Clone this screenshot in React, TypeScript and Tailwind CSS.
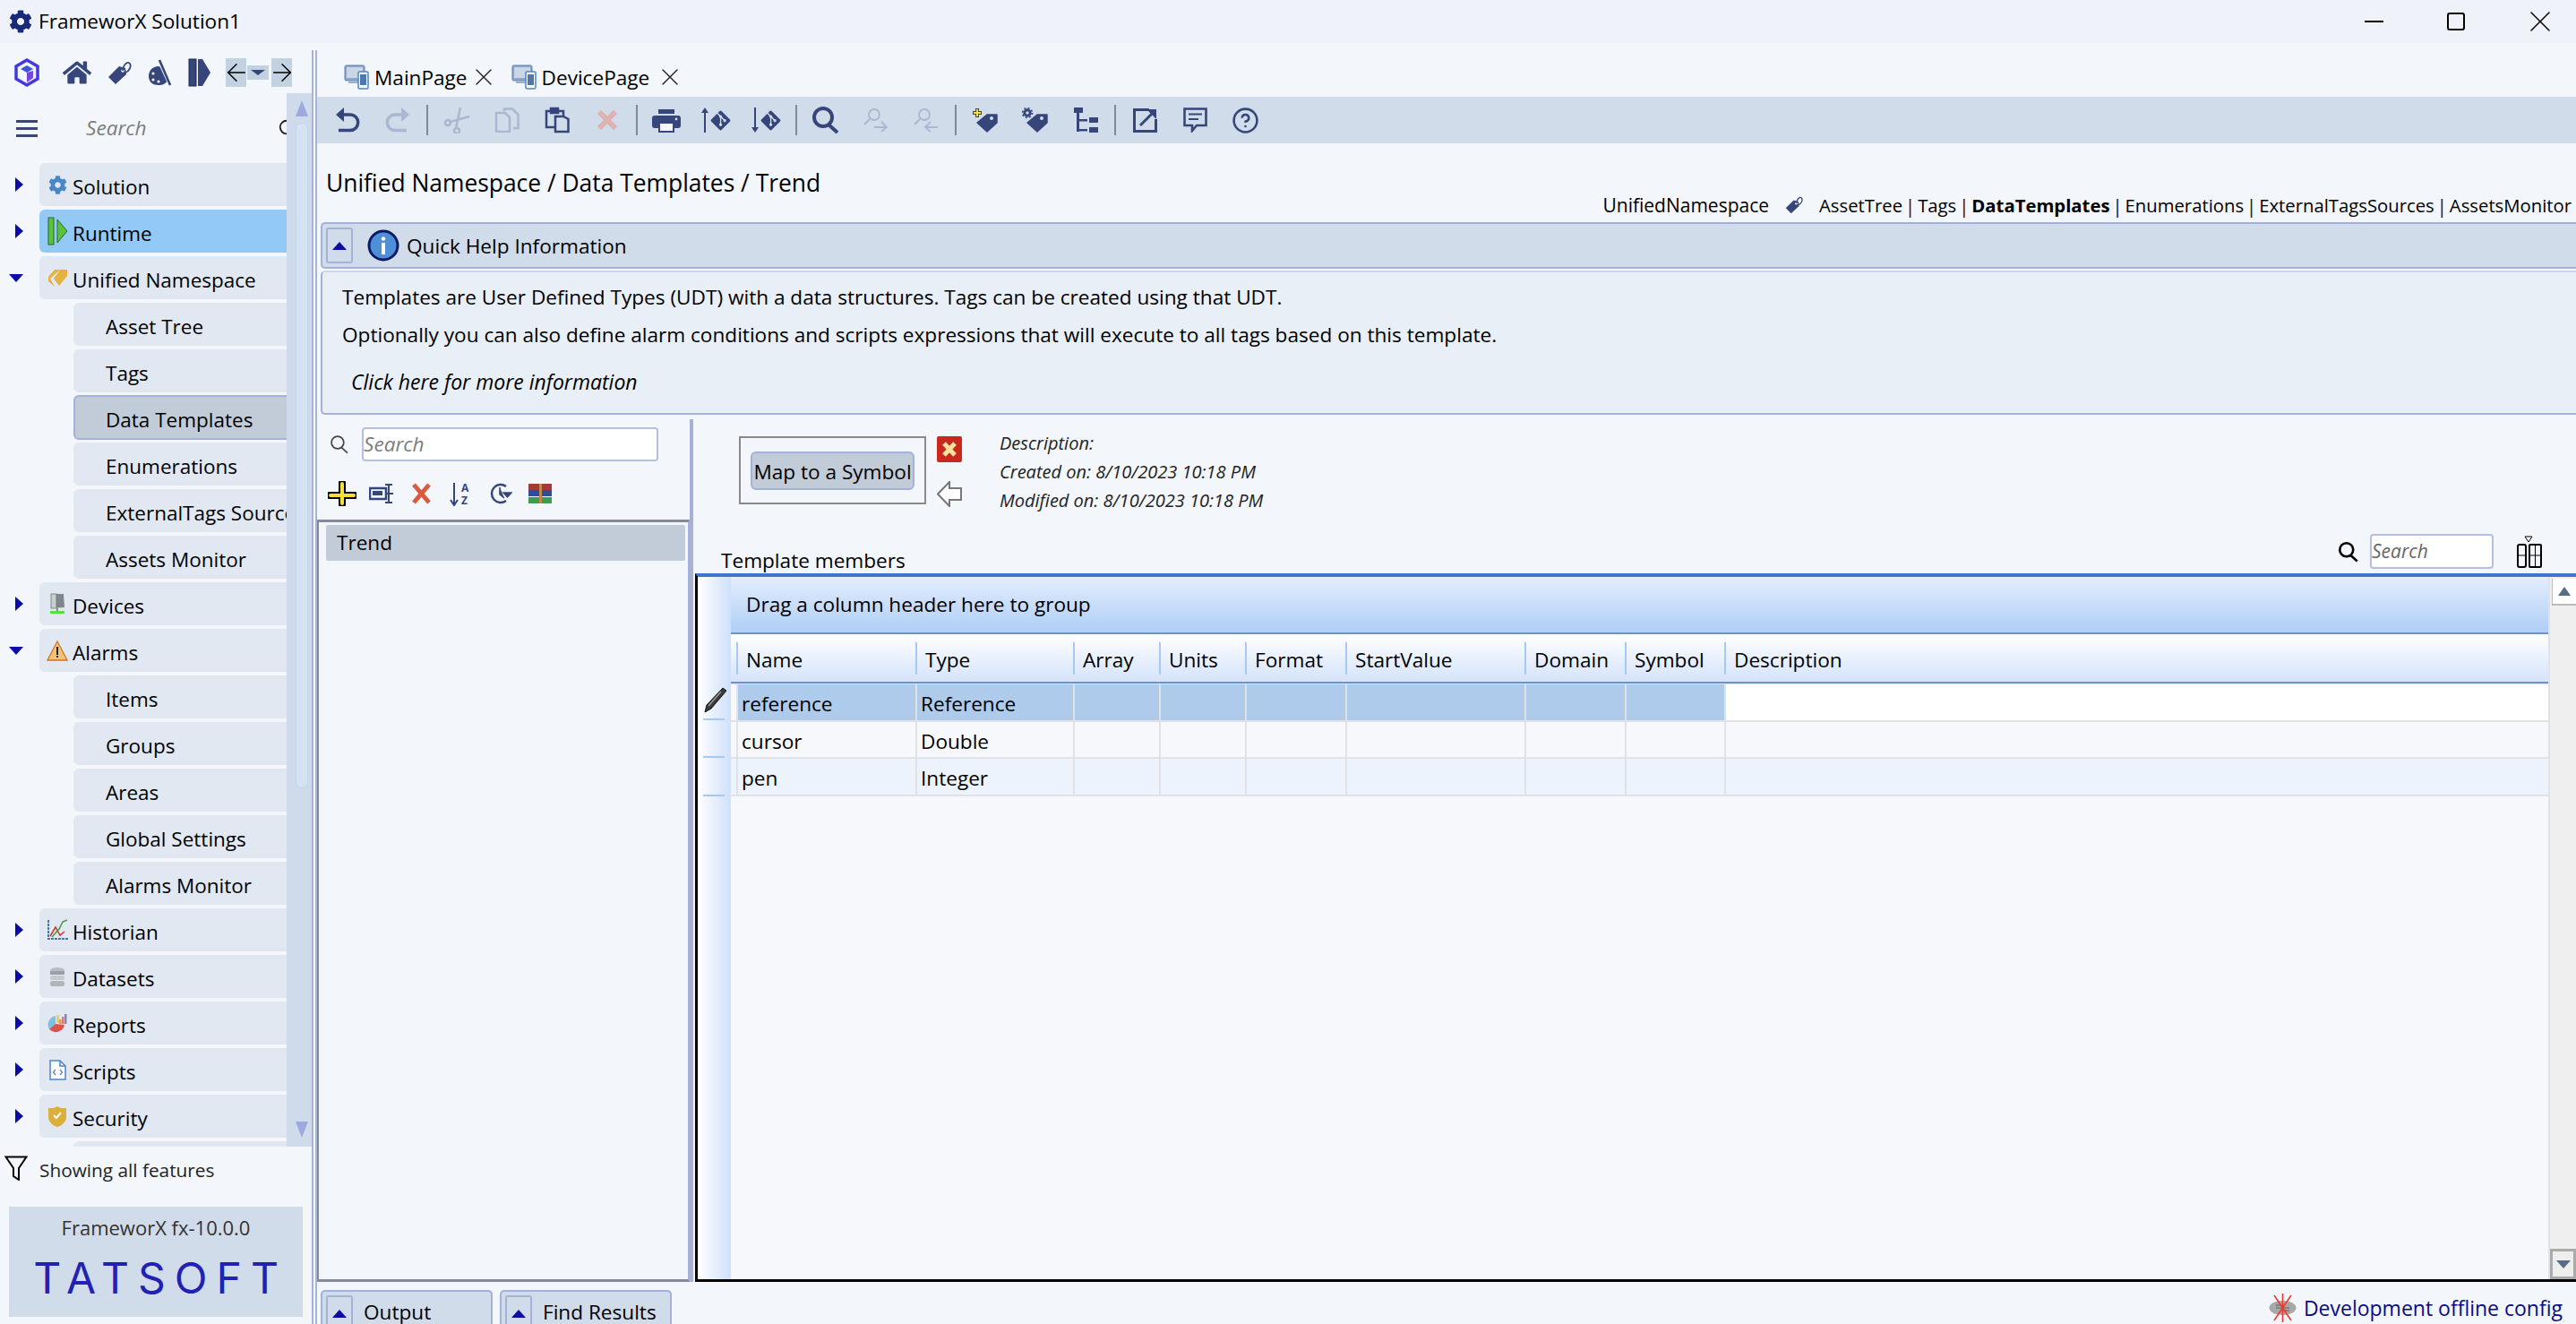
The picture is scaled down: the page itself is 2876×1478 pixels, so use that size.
import { type JSX, type ReactNode } from "react";
import { ArrowLeft, ArrowRight, CircleHelp, Search, X } from "lucide-react";
import { FaCog, FaGitAlt, FaHome } from "react-icons/fa";

const NAVY = "#36467a";
const FADED = "#a9b8d0";

type NavEntry = {
  label: string;
  level: 1 | 2;
  icon?: JSX.Element;
  expanded?: boolean;
  active?: boolean;
  selected?: boolean;
};

const Box = ({ w, h, children, className }: { w: number; h: number; children: ReactNode; className?: string }) => (
  <svg width={w} height={h} viewBox={`0 0 ${w} ${h}`} className={`shrink-0 ${className ?? ""}`}>
    {children}
  </svg>
);

const UpTriangle = () => (
  <Box w={16} h={9}>
    <polygon points="8,0 16,9 0,9" fill="#0b0ba8" />
  </Box>
);

const ToggleButton = () => (
  <div className="flex h-[40px] w-[30px] shrink-0 items-center justify-center rounded-[3px] border-2 border-[#a5b1d6]">
    <UpTriangle />
  </div>
);

const DeviceIcon = () => (
  <Box w={28} h={28}>
    <rect x="1" y="1" width="22" height="17" rx="1.5" fill="#8fa7c8" stroke="#5f7fb0" />
    <rect x="3" y="3" width="18" height="12" fill="#c9d6e6" />
    <rect x="5" y="19" width="14" height="2" fill="#9fb0c8" />
    <rect x="16" y="8" width="11" height="19" rx="1.5" fill="#fff" stroke="#4a86c8" strokeWidth="1.5" />
    <rect x="18" y="11" width="7" height="12" fill="#4f78ad" />
  </Box>
);

const LogoIcon = () => (
  <Box w={30} h={32}>
    <polygon points="15,2 27,9 27,23 15,30 3,23 3,9" fill="none" stroke="#4338e0" strokeWidth="3.5" />
    <path d="M8 12 L15 16 L22 12 L15 8 Z" fill="#3f55d8" />
    <path d="M15 16 L15 27 L22 22 L22 14 Z" fill="#7a45e0" />
  </Box>
);

const TagLoopIcon = ({ size = 27 }: { size?: number }) => (
  <svg width={size} height={size} viewBox="0 0 27 27" className="shrink-0">
    <path d="M13 6 L20 8 L21 15 L9 26 L1 18 Z" fill={NAVY} />
    <circle cx="17" cy="11" r="1.8" fill="#f3f6fb" />
    <path d="M17 11 C18 3 23 0 25 3 C27 6 24 12 20 13" fill="none" stroke={NAVY} strokeWidth="1.8" />
  </svg>
);

const PaletteIcon = () => (
  <Box w={27} h={30}>
    <path d="M12 8 C5 8 1 13 1 19 C1 26 6 29 12 29 C17 29 21 27 22 23 L15 9 Z" fill={NAVY} />
    <circle cx="6" cy="16" r="1.6" fill="#f3f6fb" />
    <circle cx="6" cy="23" r="1.6" fill="#f3f6fb" />
    <circle cx="12" cy="25" r="1.6" fill="#f3f6fb" />
    <path d="M13 2 L25 28" stroke="#f3f6fb" strokeWidth="4.5" />
    <path d="M13 1 L25 29" stroke={NAVY} strokeWidth="2.6" />
  </Box>
);

const RunIcon = () => (
  <Box w={25} h={32}>
    <rect x="1" y="1" width="8" height="30" fill={NAVY} stroke="#1d2a55" strokeWidth="1" />
    <polygon points="11,1 16,1 25,16 16,31 11,31" fill={NAVY} />
  </Box>
);

const FunnelIcon = () => (
  <Box w={26} h={28}>
    <path d="M1.5 1.5 H24.5 L16 14 V27 L10 23 V14 Z" fill="none" stroke="#000" strokeWidth="2" />
  </Box>
);

const NavGlyph = ({ children }: { children: ReactNode }) => (
  <span className="flex w-[24px] shrink-0 items-center justify-center">{children}</span>
);

const solutionIcon = <FaCog size={21} color="#4a86c8" />;
const runtimeIcon = (
  <svg width={23} height={32} viewBox="0 0 23 32">
    <rect x="1" y="1" width="6" height="30" fill="#5cc23d" stroke="#1f6b2a" />
    <polygon points="11,3 22,16 11,29" fill="#5cc23d" stroke="#1f6b2a" />
  </svg>
);
const namespaceIcon = (
  <Box w={24} h={24}>
    <path d="M9 3 H15 L4 13 L9 22 L2 16 V11 Z" fill="#e3b23f" />
    <path d="M15 3 H23 V10 L14 21 L8 13 Z" fill="#e3b23f" />
  </Box>
);
const devicesIcon = (
  <Box w={22} h={24}>
    <path d="M4 1 L18 1 L19 16 L4 17 Z" fill="#7f878c" />
    <rect x="4" y="1" width="6" height="16" fill="#c6cfc9" stroke="#666" strokeWidth="0.7" />
    <rect x="10" y="17" width="2" height="4" fill="#888" />
    <rect x="3" y="20" width="16" height="3" fill="#5ddb3f" />
  </Box>
);
const alarmsIcon = (
  <Box w={24} h={23}>
    <polygon points="12,1 23,22 1,22" fill="#f4c27a" stroke="#c67a20" strokeWidth="1.3" />
    <rect x="11" y="7" width="2" height="9" fill="#222" />
    <rect x="11" y="17" width="2" height="2" fill="#222" />
  </Box>
);
const historianIcon = (
  <Box w={24} h={24}>
    <path d="M2 1 V22 H24" fill="none" stroke="#3f74c4" strokeWidth="2" strokeDasharray="3 1" />
    <path d="M4 19 L10 9 L15 18 L20 14" fill="none" stroke="#d32f2f" strokeWidth="1.5" />
    <path d="M6 20 L14 11 L18 3 L23 1" fill="none" stroke="#3f9b3f" strokeWidth="1.5" />
  </Box>
);
const datasetsIcon = (
  <Box w={20} h={23}>
    <ellipse cx="10" cy="4" rx="8" ry="3" fill="#b9bdc2" />
    <rect x="2" y="5" width="16" height="4" fill="#9aa0a6" />
    <rect x="2" y="10" width="16" height="5" rx="2" fill="#c6cacd" />
    <rect x="2" y="16" width="16" height="6" rx="2.5" fill="#b0b5ba" />
  </Box>
);
const reportsIcon = (
  <Box w={24} h={23}>
    <path d="M10 12 L10 3 A10 10 0 0 0 3 18 Z" fill="#7fc0dc" />
    <path d="M10 12 L3 18 A10 10 0 0 0 20 13 Z" fill="#d9534f" />
    <path d="M11 11 V2 L14 2 V11 Z" fill="#e8cf62" />
    <rect x="14" y="7" width="2.5" height="5" fill="#e89a3c" />
    <rect x="17" y="4" width="2.5" height="8" fill="#d77" />
    <rect x="20" y="1" width="2.5" height="11" fill="#88a" />
  </Box>
);
const scriptsIcon = (
  <Box w={19} h={23}>
    <path d="M1 1 H12 L18 7 V22 H1 Z" fill="#fff" stroke="#4a86c8" strokeWidth="1.5" />
    <path d="M12 1 V7 H18" fill="none" stroke="#4a86c8" strokeWidth="1.5" />
    <path d="M7 11 L4.5 14 L7 17 M12 11 L14.5 14 L12 17" fill="none" stroke="#5a7fae" strokeWidth="1.2" />
  </Box>
);
const securityIcon = (
  <Box w={22} h={25}>
    <path d="M11 1 L15 3 H21 V13 C21 19 15 23 11 24 C7 23 1 19 1 13 V3 H7 Z" fill="#dcae3c" />
    <path d="M7 11 L10 14 L15 8" fill="none" stroke="#fff" strokeWidth="2" />
  </Box>
);

const navEntries: NavEntry[] = [
  { label: "Solution", level: 1, icon: solutionIcon },
  { label: "Runtime", level: 1, icon: runtimeIcon, active: true },
  { label: "Unified Namespace", level: 1, icon: namespaceIcon, expanded: true },
  { label: "Asset Tree", level: 2 },
  { label: "Tags", level: 2 },
  { label: "Data Templates", level: 2, selected: true },
  { label: "Enumerations", level: 2 },
  { label: "ExternalTags Sources", level: 2 },
  { label: "Assets Monitor", level: 2 },
  { label: "Devices", level: 1, icon: devicesIcon },
  { label: "Alarms", level: 1, icon: alarmsIcon, expanded: true },
  { label: "Items", level: 2 },
  { label: "Groups", level: 2 },
  { label: "Areas", level: 2 },
  { label: "Global Settings", level: 2 },
  { label: "Alarms Monitor", level: 2 },
  { label: "Historian", level: 1, icon: historianIcon },
  { label: "Datasets", level: 1, icon: datasetsIcon },
  { label: "Reports", level: 1, icon: reportsIcon },
  { label: "Scripts", level: 1, icon: scriptsIcon },
  { label: "Security", level: 1, icon: securityIcon },
  { label: "", level: 2 },
];

const NavRow = ({ entry }: { entry: NavEntry }) => {
  const tone = entry.selected
    ? "h-[50px] -my-px border-2 border-r-0 border-[#a5b1d6] bg-[#c2ccd9] pl-[34px]"
    : entry.active
      ? "h-12 bg-[#92c9f6] pl-[8px]"
      : entry.level === 2
        ? "h-12 bg-[#e1e8f2] pl-[36px]"
        : "h-12 bg-[#e1e8f2] pl-[8px]";

  return (
    <div className="flex shrink-0 items-center">
      <div className={`flex shrink-0 items-center justify-end pr-[18px] ${entry.level === 1 ? "w-[44px]" : "w-[82px]"}`}>
        {entry.level === 1 &&
          (entry.expanded ? (
            <Box w={16} h={9} className="-ml-2">
              <polygon points="0,0 16,0 8,9" fill="#0b0ba8" />
            </Box>
          ) : (
            <Box w={9} h={16}>
              <polygon points="0,0 9,8 0,16" fill="#0b0ba8" />
            </Box>
          ))}
      </div>
      <div className={`flex flex-1 items-center gap-[5px] overflow-hidden rounded-l-md text-[22.5px] whitespace-nowrap ${tone}`}>
        {entry.level === 1 && <NavGlyph>{entry.icon}</NavGlyph>}
        <span className="pt-[6px]">{entry.label}</span>
      </div>
    </div>
  );
};

const Sidebar = () => (
  <aside className="flex w-[348px] shrink-0 flex-col">
    <div className="flex h-14 shrink-0 items-center pt-[10px] pl-[15px]">
      <LogoIcon />
      <span className="ml-[25px]">
        <FaHome size={32} color={NAVY} />
      </span>
      <span className="ml-[18px]">
        <TagLoopIcon />
      </span>
      <span className="ml-[18px]">
        <PaletteIcon />
      </span>
      <span className="ml-[18px]">
        <RunIcon />
      </span>
      <span className="ml-[17px] flex h-[32px] w-[23px] items-center justify-center bg-[#c2d2e0]">
        <ArrowLeft size={32} color="#000" strokeWidth={1.1} className="shrink-0" />
      </span>
      <span className="ml-px flex h-[16px] w-[24px] items-center justify-center bg-[#c2d2e0]">
        <Box w={16} h={6}>
          <polygon points="0,0 16,0 8,6" fill={NAVY} />
        </Box>
      </span>
      <span className="ml-[3px] flex h-[32px] w-[23px] items-center justify-center bg-[#c2d2e0]">
        <ArrowRight size={32} color="#000" strokeWidth={1.1} className="shrink-0" />
      </span>
    </div>

    <div className="flex min-h-0 flex-1">
      <div className="flex w-[320px] shrink-0 flex-col gap-1 overflow-hidden">
        <div className="-mb-1 flex h-[78px] shrink-0 items-center overflow-hidden pl-[18px]">
          <span className="flex w-[24px] shrink-0 flex-col gap-[5px]">
            <span className="h-[3px] bg-[#36467a]" />
            <span className="h-[3px] bg-[#36467a]" />
            <span className="h-[3px] bg-[#36467a]" />
          </span>
          <span className="ml-[54px] text-[#7d7d7d] italic">Search</span>
          <span className="-mr-[12px] ml-auto">
            <Search size={22} color="#222" />
          </span>
        </div>
        {navEntries.map((entry, index) => (
          <NavRow key={index} entry={entry} />
        ))}
      </div>
      <div className="flex w-[28px] shrink-0 flex-col bg-[#cfdbea] pt-[8px] pb-[10px] pl-[10px]">
        <Box w={14} h={18}>
          <polygon points="7,0 14,18 0,18" fill="#9ea9de" />
        </Box>
        <div className="mt-[7px] h-[743px] w-[14px] rounded-full border border-[#c3d5e8] bg-[#d3e3f2]" />
        <div className="mt-auto">
          <Box w={14} h={18}>
            <polygon points="0,0 14,0 7,18" fill="#9ea9de" />
          </Box>
        </div>
      </div>
    </div>

    <div className="flex h-[67px] shrink-0 items-start pt-[10px] pl-[5px] text-[20.8px] text-[#222]">
      <FunnelIcon />
      <span className="ml-[13px] leading-[32px]">Showing all features</span>
    </div>
    <div className="mr-[10px] mb-[8px] ml-[10px] flex h-[123px] shrink-0 flex-col items-center bg-[#d1dcea] pt-[7px]">
      <span className="text-[22px] leading-[32px] text-[#333]">FrameworX fx-10.0.0</span>
      <span className="mt-[14px] pl-[10px] font-['Inter',sans-serif] text-[48px] leading-[54px] font-normal tracking-[10px] text-[#2121b5]">
        TATSOFT
      </span>
    </div>
  </aside>
);

const Undo = ({ color, flip }: { color: string; flip?: boolean }) => (
  <svg width={28} height={28} viewBox="0 0 28 28" className={flip ? "-scale-x-100" : ""}>
    <polygon points="1,8 10,0 10,16" fill={color} />
    <path d="M8 8 H17 A8 8 0 0 1 17 25.5 H4" fill="none" stroke={color} strokeWidth="3.5" />
  </svg>
);

const Scissors = () => (
  <Box w={30} h={30}>
    <g fill="none" stroke={FADED} strokeWidth="2.5">
      <circle cx="5" cy="18" r="3" />
      <circle cx="15" cy="27" r="3" />
      <path d="M8 17 L29 11 M14 24 L19 1" />
    </g>
  </Box>
);

const Copy = () => (
  <Box w={28} h={28}>
    <g fill="none" stroke={FADED} strokeWidth="2.5">
      <path d="M11 4 V1.5 H20 L26.5 8 V23 H21" />
      <path d="M2 6 H12 L17 11 V27 H2 Z" />
    </g>
  </Box>
);

const Paste = () => (
  <Box w={28} h={30}>
    <g fill="none" stroke={NAVY} strokeWidth="2.5">
      <path d="M7 5 H2 V23 H11" />
      <path d="M15 5 H21 V10" />
      <rect x="7" y="2" width="8" height="5" fill={NAVY} />
      <path d="M12 11 H21 L26.5 14 V28 H12 Z" />
    </g>
  </Box>
);

const CrossX = () => (
  <Box w={24} h={24}>
    <path d="M3 3 L21 21 M21 3 L3 21" stroke="#e4a9a4" strokeWidth="5.5" />
    <path d="M3 3 L21 21 M21 3 L3 21" stroke="#dcb6b6" strokeWidth="3" />
  </Box>
);

const PrintIcon = () => (
  <Box w={32} h={27}>
    <rect x="7" y="1" width="18" height="5" fill={NAVY} />
    <rect x="0" y="8" width="32" height="14" rx="3" fill={NAVY} />
    <circle cx="27" cy="12" r="1.4" fill="#d1dcea" />
    <rect x="8" y="16" width="16" height="10" fill="#f3f6fb" stroke={NAVY} strokeWidth="2" />
  </Box>
);

const GitArrow = ({ up }: { up?: boolean }) => (
  <span className="flex items-center gap-[1px]">
    <svg width={8} height={28} viewBox="0 0 8 28">
      {up ? (
        <polygon points="4,0 8,6 5,6 5,28 3,28 3,6 0,6" fill={NAVY} />
      ) : (
        <polygon points="3,0 5,0 5,22 8,22 4,28 0,22 3,22" fill={NAVY} />
      )}
    </svg>
    <FaGitAlt size={25} color={NAVY} />
  </span>
);

const Magnifier = ({ color = NAVY, size = 32, stroke = 4 }: { color?: string; size?: number; stroke?: number }) => (
  <svg width={size} height={size} viewBox="0 0 32 32" className="shrink-0">
    <circle cx="13" cy="13" r="10" fill="none" stroke={color} strokeWidth={stroke} />
    <path d="M19 21 L29 30" stroke={color} strokeWidth={stroke} />
  </svg>
);

const UserArrow = ({ back }: { back?: boolean }) => (
  <Box w={30} h={28}>
    <g fill="none" stroke={FADED} strokeWidth="1.8">
      <circle cx="13" cy="8" r="6" />
      <path d="M8 13 L2 19" />
      {back ? <path d="M28 22 H14 M20 16 L14 22 L20 27" /> : <path d="M13 22 H27 M21 16 L27 22 L21 27" />}
    </g>
  </Box>
);

const TagBadge = ({ gear }: { gear?: boolean }) => (
  <Box w={30} h={28}>
    <path d="M17 8 H28 V17 L17 27 L6 17 Z" fill={NAVY} strokeLinejoin="round" stroke={NAVY} strokeWidth="1.5" />
    <circle cx="22" cy="12" r="2" fill="#d1dcea" />
    {gear ? (
      <g fill="none" stroke={NAVY}>
        <circle cx="6" cy="6" r="3.2" strokeWidth="3" />
        <circle cx="6" cy="6" r="5.5" strokeWidth="1.6" strokeDasharray="2 2.3" />
      </g>
    ) : (
      <>
        <path d="M6 1 V11 M1 6 H11" stroke="#444" strokeWidth="4" />
        <path d="M6 2 V10 M2 6 H10" stroke="#f8df33" strokeWidth="2" />
      </>
    )}
  </Box>
);

const TreeIcon = () => (
  <Box w={27} h={28}>
    <g fill={NAVY}>
      <rect x="0" y="0" width="10" height="6" />
      <rect x="3" y="6" width="3" height="21" />
      <rect x="5" y="13" width="10" height="2.5" />
      <rect x="5" y="24" width="10" height="2.5" />
      <rect x="17" y="11" width="10" height="6" />
      <rect x="17" y="22" width="10" height="6" />
    </g>
  </Box>
);

const ExternalIcon = () => (
  <Box w={27} h={27}>
    <g fill="none" stroke={NAVY} strokeWidth="3">
      <path d="M18 1.5 H1.5 V25.5 H25.5 V12" />
      <path d="M8 19 L22 5" />
    </g>
    <polygon points="15,1 26,1 26,12" fill={NAVY} />
  </Box>
);

const CommentIcon = () => (
  <Box w={27} h={28}>
    <path d="M1.5 1.5 H25.5 V20 H15 L10 26 V20 H1.5 Z" fill="none" stroke={NAVY} strokeWidth="2.6" />
    <path d="M6 7.5 H21 M6 13 H17" stroke={NAVY} strokeWidth="2.2" />
  </Box>
);

const toolbarItems: (JSX.Element | "sep")[] = [
  <Undo color={NAVY} />,
  <Undo color={FADED} flip />,
  "sep",
  <Scissors />,
  <Copy />,
  <Paste />,
  <CrossX />,
  "sep",
  <PrintIcon />,
  <GitArrow up />,
  <GitArrow />,
  "sep",
  <Magnifier />,
  <UserArrow />,
  <UserArrow back />,
  "sep",
  <TagBadge />,
  <TagBadge gear />,
  <TreeIcon />,
  "sep",
  <ExternalIcon />,
  <CommentIcon />,
  <CircleHelp size={31} color={NAVY} strokeWidth={2} />,
];

const Toolbar = () => (
  <div className="flex h-[52px] shrink-0 items-center bg-[#d1dcea] pl-1.5">
    {toolbarItems.map((item, index) =>
      item === "sep" ? (
        <span key={index} className="flex h-[34px] w-[10px] justify-center">
          <span className="h-full w-[2px] bg-[#808a94]" />
        </span>
      ) : (
        <span key={index} className="flex w-14 items-center justify-center">
          {item}
        </span>
      ),
    )}
  </div>
);

const subLinks = ["AssetTree", "Tags", "DataTemplates", "Enumerations", "ExternalTagsSources", "AssetsMonitor"];

const PageTab = ({ label, first }: { label: string; first?: boolean }) => (
  <div className={`flex items-center ${first ? "" : "ml-[23px]"}`}>
    <DeviceIcon />
    <span className="ml-[6px]">{label}</span>
    <span className={`flex w-[16px] items-center justify-center ${first ? "ml-[10px]" : "ml-[15px]"}`}>
      <X size={32} color="#222" strokeWidth={1} className="shrink-0" />
    </span>
  </div>
);

const columns = ["Name", "Type", "Array", "Units", "Format", "StartValue", "Domain", "Symbol", "Description"];
const columnGrid = "grid grid-cols-[200px_176px_96px_96px_112px_200px_112px_111px_1fr]";

const rows = [
  { name: "reference", type: "Reference", height: "h-[42px]", tone: "bg-[#f6f8fc]", selected: true },
  { name: "cursor", type: "Double", height: "h-[41px]", tone: "bg-[#f6f8fc]" },
  { name: "pen", type: "Integer", height: "h-[42px]", tone: "bg-[#edf3fd]" },
];

const ColumnChooser = () => (
  <Box w={33} h={36}>
    <polygon points="12,1 20,1 16,7" fill="none" stroke="#000" strokeWidth="1" />
    <rect x="4" y="10" width="9" height="25" rx="2" fill="none" stroke="#000" strokeWidth="2" />
    <rect x="17" y="10" width="13" height="25" rx="1" fill="none" stroke="#000" strokeWidth="2" />
    <path d="M4 22 H13 M17 22 H30 M23.5 10 V35" stroke="#000" strokeWidth="1" />
  </Box>
);

const MembersGrid = () => (
  <div className="flex min-h-0 flex-1 border-t-4 border-b-[3px] border-l-[3px] border-t-[#3e76cd] border-b-black border-l-black">
    <div className="w-[37px] shrink-0 bg-linear-to-r from-white to-[#cfe0fb] pt-[122px] pl-[6px]">
      <svg width={28} height={30} viewBox="0 0 28 30">
        <path d="M22 2 L26 5 L9 25 L2 29 L4 21 Z" fill="#3a3a3a" stroke="#111" />
        <path d="M6 22 L20 6" stroke="#999" strokeWidth="1.5" />
      </svg>
      <div className="mt-[6px] h-[2px] w-[24px] bg-[#a8c8f4]" />
      <div className="mt-[40px] h-[2px] w-[24px] bg-[#a8c8f4]" />
      <div className="mt-[41px] h-[2px] w-[24px] bg-[#a8c8f4]" />
    </div>

    <div className="flex min-w-0 flex-1 flex-col bg-[#f6f8fc]">
      <div className="flex h-[64px] shrink-0 items-center border-b-2 border-[#6e93c9] bg-linear-to-b from-[#e3eefd] to-[#b0cdf6] pl-[17px]">
        Drag a column header here to group
      </div>
      <div className={`h-[55px] shrink-0 items-center border-b-2 border-[#6e93c9] bg-linear-to-b from-white to-[#d4e3fb] pl-[6px] ${columnGrid}`}>
        {columns.map((column) => (
          <div key={column} className="flex h-[36px] items-center border-l-2 border-[#a8c8f4] pt-1 pl-[9px]">
            {column}
          </div>
        ))}
      </div>
      <div className="h-px shrink-0 bg-[#e0e2e8]" />
      {rows.map((row) => (
        <div key={row.name} className={`shrink-0 border-b-2 border-[#e0e2e8] pl-[6px] ${row.height} ${row.tone} ${columnGrid}`}>
          {columns.map((column, index) => {
            const isLast = index === columns.length - 1;
            const fill = row.selected ? (isLast ? "bg-white" : "bg-[#aecbeb]") : "";
            const text = index === 0 ? row.name : index === 1 ? row.type : "";
            return (
              <div key={column} className={`flex items-center border-l-2 border-[#e0e2e8] pt-1 pl-[4px] ${fill}`}>
                {text}
              </div>
            );
          })}
        </div>
      ))}
    </div>

    <div className="flex w-[31px] shrink-0 flex-col border-l-2 border-[#e0e2e8] bg-[#efefef] pt-[2px]">
      <div className="ml-[2px] flex h-[30px] items-center justify-center border-b-2 border-l border-[#bbb] bg-white">
        <Box w={14} h={10}>
          <polygon points="7,0 14,10 0,10" fill="#5a6b85" />
        </Box>
      </div>
      <div className="mt-auto flex h-[34px] items-center justify-center border-[3px] border-[#aaa] bg-[#eee]">
        <Box w={16} h={9}>
          <polygon points="0,0 16,0 8,9" fill="#5a6b85" />
        </Box>
      </div>
    </div>
  </div>
);

const TemplateList = () => (
  <div className="flex w-[416px] shrink-0 flex-col">
    <div className="flex items-center pt-[9px] pl-[14px]">
      <Magnifier color="#444" size={22} stroke={2.5} />
      <div className="ml-[14px] flex h-[38px] w-[331px] items-center rounded-[4px] border-2 border-[#b5bfe0] bg-white text-[#7d7d7d] italic">
        Search
      </div>
    </div>
    <div className="mt-[22px] flex h-[28px] items-center pl-[12px]">
      <svg width={32} height={28} viewBox="0 0 32 28">
        <path d="M16 2 V26 M2 16 H30" stroke="#000" strokeWidth="8" strokeLinecap="round" />
        <path d="M16 3 V25 M3 16 H29" stroke="#f8df33" strokeWidth="4" strokeLinecap="round" />
      </svg>
      <span className="ml-[14px]">
        <Box w={28} h={24}>
          <rect x="1" y="6" width="18" height="12" fill="none" stroke={NAVY} strokeWidth="2.5" />
          <rect x="4" y="9" width="11" height="5" fill={NAVY} />
          <path d="M22 2 V22 M18 2 H26 M18 22 H26 M19 12 H27" stroke={NAVY} strokeWidth="2" />
        </Box>
      </span>
      <span className="ml-[19px]">
        <Box w={23} h={24}>
          <path d="M3 2 L20 22 M20 2 L3 22" stroke="#d95a3c" strokeWidth="5" />
        </Box>
      </span>
      <span className="ml-[20px]">
        <Box w={24} h={27}>
          <path d="M5 1 V25 M1 20 L5 26 L9 20" fill="none" stroke={NAVY} strokeWidth="2" />
          <text x="13" y="11" fontSize="12" fontWeight="700" fill={NAVY}>A</text>
          <text x="13" y="25" fontSize="12" fontWeight="700" fill={NAVY}>Z</text>
        </Box>
      </span>
      <span className="ml-[21px]">
        <Box w={25} h={24}>
          <path d="M18 20 A10 10 0 1 1 18 4" fill="none" stroke={NAVY} strokeWidth="2.5" />
          <path d="M11 5 V13 L16 17 M15 11 H24 L19.5 16 Z" fill={NAVY} stroke={NAVY} strokeWidth="1.5" />
        </Box>
      </span>
      <span className="ml-[16px]">
        <Box w={28} h={22}>
          <rect x="2" y="0" width="26" height="7" fill="#a33a3a" />
          <rect x="2" y="7" width="26" height="7" fill="#2f4da0" />
          <rect x="2" y="15" width="26" height="7" fill="#3f9b4f" />
          <rect x="14" y="0" width="3" height="22" fill="#c08a4a" />
        </Box>
      </span>
    </div>
    <div className="mt-[15px] flex min-h-0 flex-1 flex-col border-t-[3px] border-r-2 border-b-[3px] border-l-2 border-t-[#85899a] border-r-[#a5b1d6] border-b-[#85899a] border-l-[#85899a] pt-[3px] pr-[3px] pl-[8px]">
      <div className="flex h-[40px] items-center rounded-[2px] bg-[#c2ccd9] pl-[12px]">Trend</div>
    </div>
  </div>
);

const TemplateDetail = () => (
  <div className="ml-[2px] flex min-w-0 flex-1 flex-col">
    <div className="flex h-[98px] shrink-0 items-start pt-[19px] pl-[49px]">
      <div className="flex h-[76px] w-[209px] items-center justify-center border-2 border-[#8a8a8a]">
        <div className="flex h-[43px] w-[183px] items-center justify-center rounded-[6px] border-2 border-[#a5b1d6] bg-[#c2ccd9] pt-1 whitespace-nowrap">
          Map to a Symbol
        </div>
      </div>
      <div className="ml-[12px] flex w-[28px] flex-col gap-[21px]">
        <Box w={28} h={29}>
          <rect x="0" y="0" width="28" height="29" rx="2" fill="#c8281e" />
          <path d="M8 8 L20 21 M20 8 L8 21" stroke="#f8e2a0" strokeWidth="5" />
        </Box>
        <Box w={28} h={29}>
          <path d="M14 1 V8 H27 V21 H14 V28 L1 14.5 Z" fill="#fff" stroke="#777" strokeWidth="2" />
        </Box>
      </div>
      <div className="-mt-2 ml-[42px] text-[20px] leading-[32px] text-[#222] italic">
        <div>Description:</div>
        <div>Created on: 8/10/2023 10:18 PM</div>
        <div>Modified on: 8/10/2023 10:18 PM</div>
      </div>
    </div>

    <div className="flex h-[74px] shrink-0 items-start pt-[30px] pl-[29px]">
      <span className="mt-[14px] leading-[32px]">Template members</span>
      <div className="ml-auto flex items-center pr-[36px]">
        <Magnifier color="#000" size={24} stroke={3.5} />
        <div className="ml-[12px] flex h-[39px] w-[138px] items-center rounded-[4px] border-2 border-[#b5bfe0] bg-white text-[21px] text-[#666] italic">
          Search
        </div>
        <span className="ml-[23px]">
          <ColumnChooser />
        </span>
      </div>
    </div>

    <MembersGrid />
  </div>
);

const BottomTab = ({ label }: { label: string }) => (
  <div className="flex h-[48px] w-[192px] items-start gap-[12px] rounded-t-[5px] border-2 border-b-0 border-[#a5b1d6] bg-[#d1dcea] pt-[4px] pl-[4px]">
    <ToggleButton />
    <span className="leading-[38px]">{label}</span>
  </div>
);

const MainColumn = () => (
  <main className="flex min-w-0 flex-1 flex-col">
    <div className="flex h-[60px] shrink-0 items-center pt-[17px] pl-[30px]">
      <PageTab label="MainPage" first />
      <PageTab label="DevicePage" />
    </div>
    <Toolbar />

    <div className="h-[88px] shrink-0">
      <h1 className="pt-[27px] pl-[10px] text-[26.4px] leading-[34px]">Unified Namespace / Data Templates / Trend</h1>
      <div className="flex h-[16px] items-center justify-end pr-[5px] text-[20.3px] leading-none whitespace-nowrap">
        <span className="text-[21px]">UnifiedNamespace</span>
        <span className="mr-[18px] ml-[18px]">
          <TagLoopIcon size={20} />
        </span>
        {subLinks.map((link, index) => (
          <span key={link} className="flex items-center">
            {index > 0 && <span className="mx-[2.5px] text-[22px] leading-none text-[#222]">|</span>}
            <span className={link === "DataTemplates" ? "font-bold" : ""}>{link}</span>
          </span>
        ))}
      </div>
    </div>

    <div className="ml-1 flex h-[52px] shrink-0 items-center rounded-l-[5px] border-2 border-r-0 border-[#a5b1d6] bg-[#d1dcea] pl-[4px]">
      <ToggleButton />
      <svg width={36} height={36} viewBox="0 0 36 36" className="ml-[16px]">
        <circle cx="18" cy="18" r="16" fill="#4f8fd8" stroke="#0d1a66" strokeWidth="3" />
        <circle cx="18" cy="10.5" r="2.2" fill="#fff" />
        <rect x="16" y="15" width="4" height="13" fill="#fff" />
      </svg>
      <span className="ml-[8px] pt-[2px]">Quick Help Information</span>
    </div>

    <div className="mt-[2px] ml-1 h-[161px] shrink-0 rounded-l-[5px] border-2 border-r-0 border-[#a5b1d6] border-t-[#cdd6ea] bg-[#e9eff7] pt-[7px] pl-[22px]">
      <div className="leading-[42px]">Templates are User Defined Types (UDT) with a data structures. Tags can be created using that UDT.</div>
      <div className="leading-[42px]">Optionally you can also define alarm conditions and scripts expressions that will execute to all tags based on this template.</div>
      <div className="mt-[10px] ml-[10px] text-[23px] leading-[42px] italic">Click here for more information</div>
    </div>

    <div className="mt-[5px] flex min-h-0 flex-1">
      <TemplateList />
      <div className="w-[4px] shrink-0 bg-[#a5b1d6]" />
      <TemplateDetail />
    </div>

    <div className="flex h-[47px] shrink-0 items-start gap-[8px] pt-[9px] pl-1">
      <BottomTab label="Output" />
      <BottomTab label="Find Results" />
      <div className="ml-auto flex h-[40px] items-center pr-[15px] text-[23px] text-[#0b0b8a]">
        <svg width={31} height={32} viewBox="0 0 31 32">
          <ellipse cx="15.5" cy="16" rx="15" ry="8" fill="#a8a8a8" />
          <path d="M8 16 H23 M8 13 H14 M17 19 H23" stroke="#777" strokeWidth="1.5" />
          <path d="M15.5 0 V32 M6 2 L25 30 M25 2 L6 30" stroke="#ee3a2e" strokeWidth="1.6" />
        </svg>
        <span className="ml-[8px]">Development offline config</span>
      </div>
    </div>
  </main>
);

export default function App(): JSX.Element {
  return (
    <div className="flex h-[1478px] w-[2876px] flex-col overflow-hidden bg-[#f3f6fb] font-['Open_Sans',sans-serif] text-[22.6px] text-black">
      <header className="flex h-12 shrink-0 items-center bg-[#eff3f9] pl-[10px]">
        <FaCog size={26} color="#1b2a78" />
        <span className="ml-[7px]">FrameworX Solution1</span>
        <div className="ml-auto flex items-center pr-[30px]">
          <span className="h-[2px] w-[21px] bg-black" />
          <span className="ml-[71px] h-[20px] w-[20px] rounded-[3px] border-2 border-black" />
          <span className="ml-[73px] flex w-[21px] items-center justify-center">
            <X size={40} color="#000" strokeWidth={0.9} className="shrink-0" />
          </span>
        </div>
      </header>
      <div className="flex min-h-0 flex-1">
        <Sidebar />
        <div className="mt-[8px] h-auto w-[6px] shrink-0 border-x-2 border-[#a8b3d8]" />
        <MainColumn />
      </div>
    </div>
  );
}
